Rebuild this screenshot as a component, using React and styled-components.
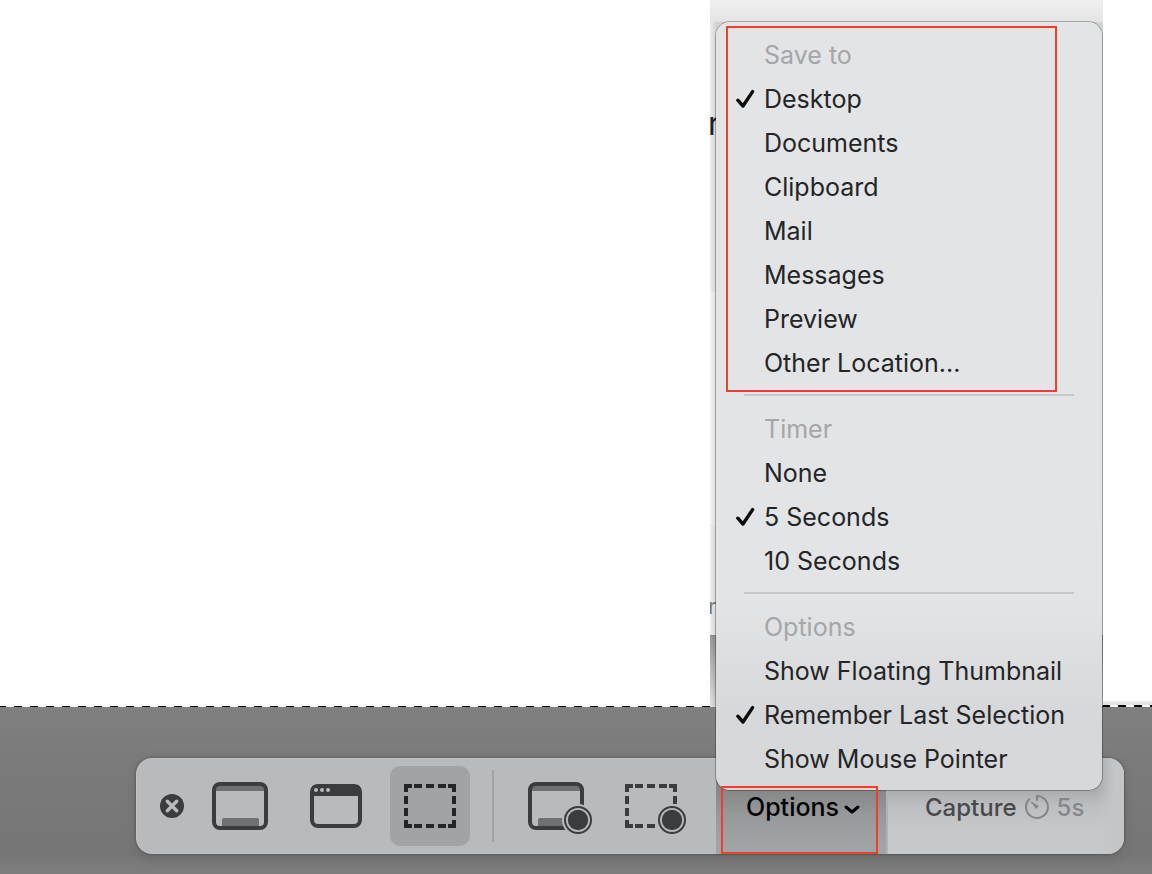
import React from "react";
import styled, { createGlobalStyle, css } from "styled-components";

const Global = createGlobalStyle`
  * { box-sizing: border-box; }
  body { margin: 0; font-family: Inter, "Liberation Sans", sans-serif; background: #fff; }
  button { font: inherit; border: 0; padding: 0; background: none; color: inherit; }
`;

const Screen = styled.main`
  min-height: 100vh;
  display: flex;
  flex-direction: column;
  overflow: hidden;
`;

const Selection = styled.section`
  flex: 1;
  display: flex;
  justify-content: flex-end;
  background: #fff;
  position: relative;
`;

const DashLine = styled.div`
  position: absolute;
  left: -2px;
  right: 0;
  bottom: 0;
  height: 1px;
  background: repeating-linear-gradient(90deg, #000 0 8px, transparent 8px 16px);
`;

const Edge = styled.div`
  width: 49px;
  align-self: flex-end;
  background: linear-gradient(#ececec, #dcdcdc);
  padding-top: 4px;
  &::after {
    content: "";
    display: block;
    height: 2px;
    background: repeating-linear-gradient(90deg, #000 0 7px, #fff 7px 15px, #000 15px 16px);
  }
`;

const Backdrop = styled.div`
  width: 393px;
  display: flex;
  flex-direction: column;
  overflow: hidden;
`;

const TopBand = styled.div`
  height: 22px;
  background: linear-gradient(#f0f0f0, #e4e4e4);
`;

const Band = styled.div`
  flex: ${(p) => p.$size} 0 0;
  overflow: hidden;
  border-top: 1px solid ${(p) => p.$edge || "transparent"};
  background: linear-gradient(90deg, transparent, rgba(0, 0, 0, 0.12) 6px), ${(p) => p.$tone};
`;

const Line = styled.div`
  margin-left: -2px;
  padding-top: ${(p) => p.$space}px;
  font-size: ${(p) => (p.$small ? 22 : 32)}px;
  line-height: 32px;
  color: ${(p) => (p.$small ? "#777" : "#222")};
`;

const Dimmed = styled.section`
  background: linear-gradient(#808080, #7b7b7b 48px, #767676 148px, #7e7e7e);
  padding: 51px 28px 20px 136px;
`;

const Toolbar = styled.div`
  height: 96px;
  display: flex;
  align-items: stretch;
  border-radius: 16px;
  background: #b9babc;
  box-shadow: inset 0 0 0 1px rgba(255, 255, 255, 0.12), 0 0 3px rgba(0, 0, 0, 0.4), 0 4px 14px rgba(0, 0, 0, 0.1);
`;

const Tools = styled.div`
  flex: 1;
  display: flex;
  align-items: center;
`;

const CloseButton = styled.button`
  width: 24px;
  height: 24px;
  margin: 0 16px 0 24px;
  svg { display: block; }
`;

const ToolButton = styled.button`
  width: 80px;
  height: 80px;
  margin-right: 15px;
  border-radius: 10px;
  color: #3b3c3e;
  svg { display: block; }
  ${(p) => p.$active && css`
    background: #a2a3a5;
    color: #242526;
  `}
`;

const Divider = styled.div`
  width: 2px;
  height: 72px;
  margin: 0 22px 0 7px;
  background: #a2a3a5;
`;

const OptionsAnchor = styled.div`
  position: relative;
  width: 172px;
  display: flex;
  border-right: 2px solid #b0b1b3;
`;

const OptionsButton = styled.button`
  flex: 1;
  display: flex;
  align-items: center;
  padding: 2px 0 0 30px;
  gap: 4px;
  font-size: 25px;
  font-weight: 500;
  color: #000;
  background: linear-gradient(#858688 32px, #97989a 56px, #a2a3a5 88px);
  svg { margin-top: 4px; }
`;

const CaptureButton = styled.button`
  width: 236px;
  display: flex;
  align-items: center;
  padding: 2px 0 0 37px;
  gap: 7px;
  font-size: 24px;
  font-weight: 500;
  color: #48494b;
  border-radius: 0 16px 16px 0;
  background:
    linear-gradient(90deg, transparent 208px, #c4c5c7 226px),
    linear-gradient(#a8a9ab 30px, #bdbec0 48px, #c7c8ca 72px);
  span { color: #858688; }
  svg { color: #858688; }
`;

const Menu = styled.div`
  position: absolute;
  z-index: 2;
  left: 0;
  bottom: 64px;
  width: 386px;
  padding: 11px 0 9px;
  border-radius: 14px;
  background: linear-gradient(#e3e4e6 580px, #d7d8da 690px);
  box-shadow: 0 0 0 1px rgba(0, 0, 0, 0.28);
`;

const MenuTitle = styled.div`
  height: 44px;
  padding-left: 48px;
  font-size: 25px;
  line-height: 44px;
  color: #a5a6a8;
`;

const MenuItem = styled.button`
  width: 100%;
  height: 44px;
  display: flex;
  align-items: center;
  padding-left: 19px;
  gap: 9px;
  font-size: 25px;
  line-height: 44px;
  color: #242526;
  white-space: nowrap;
`;

const CheckSlot = styled.span`
  width: 20px;
  height: 20px;
  svg { display: block; }
`;

const Separator = styled.hr`
  height: 2px;
  margin: 9px 28px 11px;
  border: 0;
  background: #c7c8ca;
`;

const Highlight = styled.div`
  position: absolute;
  z-index: 3;
  top: ${(p) => p.$top}px;
  left: ${(p) => p.$left}px;
  width: ${(p) => p.$width}px;
  height: ${(p) => p.$height}px;
  border: 2px solid #ee4028;
  pointer-events: none;
`;

const sections = [
  { title: "Save to", items: ["Desktop", "Documents", "Clipboard", "Mail", "Messages", "Preview", "Other Location..."], checked: "Desktop" },
  { title: "Timer", items: ["None", "5 Seconds", "10 Seconds"], checked: "5 Seconds" },
  { title: "Options", items: ["Show Floating Thumbnail", "Remember Last Selection", "Show Mouse Pointer"], checked: "Remember Last Selection" },
];

const Check = () => (
  <svg width="20" height="20" viewBox="0 0 20 20" fill="none" stroke="#0c0c0d" strokeWidth="3.4" strokeLinecap="round" strokeLinejoin="round">
    <path d="M2.8 11.2 L8 17 L17.6 2.6" />
  </svg>
);

const CloseIcon = () => (
  <svg width="24" height="24" viewBox="0 0 24 24">
    <circle cx="12" cy="12" r="12" fill="#3b3c3e" />
    <path d="M7.3 7.3 L16.7 16.7 M16.7 7.3 L7.3 16.7" stroke="#b9babc" strokeWidth="3.4" strokeLinecap="round" />
  </svg>
);

const Record = ({ x, y }) => (
  <g>
    <circle cx={x} cy={y} r="16" fill="#b9babc" />
    <circle cx={x} cy={y} r="13" fill="none" stroke="currentColor" strokeWidth="2" />
    <circle cx={x} cy={y} r="10.2" fill="currentColor" />
  </g>
);

const ScreenIcon = ({ record }) => (
  <svg width="80" height="80" viewBox="0 0 80 80">
    <path d="M14 18 H66 V25 H14 Z" fill="#6f7072" />
    <path d="M22 61 V54 Q22 52 24 52 H57 Q59 52 59 54 V61 Z" fill="#6f7072" />
    <rect x="14" y="18" width="52" height="44" rx="6" fill="none" stroke="currentColor" strokeWidth="4" />
    {record && <Record x={62} y={54} />}
  </svg>
);

const WindowIcon = () => (
  <svg width="80" height="80" viewBox="0 0 80 80">
    <rect x="17" y="20" width="48" height="40" rx="6" fill="none" stroke="currentColor" strokeWidth="4" />
    <path d="M16 30 V24 Q16 19 21 19 H61 Q66 19 66 24 V30 Z" fill="currentColor" />
    <g fill="#b9babc">
      <circle cx="21" cy="24" r="2" />
      <circle cx="27" cy="24" r="2" />
      <circle cx="33" cy="24" r="2" />
    </g>
  </svg>
);

const AreaIcon = ({ record }) => (
  <svg width="80" height="80" viewBox="0 0 80 80">
    <path
      d="M14 26 V18 H22 V22 H18 V26 Z M58 18 H66 V26 H62 V22 H58 Z M14 54 H18 V58 H22 V62 H14 Z M62 54 H66 V62 H58 V58 H62 Z
         M24 18 H32 V22 H24 Z M36 18 H44 V22 H36 Z M48 18 H56 V22 H48 Z M24 58 H32 V62 H24 Z M36 58 H44 V62 H36 Z M48 58 H56 V62 H48 Z
         M14 30 H18 V38 H14 Z M14 42 H18 V50 H14 Z M62 30 H66 V38 H62 Z M62 42 H66 V50 H62 Z"
      fill="currentColor"
    />
    {record && <Record x={61} y={54} />}
  </svg>
);

const Chevron = () => (
  <svg width="18" height="12" viewBox="0 0 18 12" fill="none" stroke="currentColor" strokeWidth="3" strokeLinecap="round" strokeLinejoin="round">
    <path d="M3 4 L9 9 L15 4" />
  </svg>
);

const TimerIcon = () => (
  <svg width="26" height="26" viewBox="0 0 26 26" fill="none" stroke="currentColor" strokeWidth="2" strokeLinecap="round">
    <path d="M13 6 V2 A11 11 0 1 1 5.2 5.2" />
    <path d="M7.5 8.3 L14.2 12 L12.6 14.2 Z" fill="currentColor" strokeWidth="1" strokeLinejoin="round" />
  </svg>
);

export default function App() {
  return (
    <Screen>
      <Global />
      <Selection>
        <Backdrop aria-hidden="true">
          <TopBand />
          <Band $size={271} $tone="#efefef">
            <Line $space={85}>r</Line>
          </Band>
          <Band $size={233} $tone="#f8f8f8" />
          <Band $size={110} $tone="#f0f0f0" $edge="#e0e0e0">
            <Line $small $space={64}>n</Line>
          </Band>
          <Band $size={71} $tone="linear-gradient(#9c9c9c, #e4e4e4)" $edge="#8a8a8a" />
        </Backdrop>
        <Edge />
        <DashLine />
      </Selection>
      <Dimmed>
        <Toolbar role="toolbar" aria-label="Screenshot">
          <Tools>
            <CloseButton aria-label="Close"><CloseIcon /></CloseButton>
            <ToolButton aria-label="Capture entire screen"><ScreenIcon /></ToolButton>
            <ToolButton aria-label="Capture window"><WindowIcon /></ToolButton>
            <ToolButton aria-label="Capture selection" $active><AreaIcon /></ToolButton>
            <Divider />
            <ToolButton aria-label="Record entire screen"><ScreenIcon record /></ToolButton>
            <ToolButton aria-label="Record selection"><AreaIcon record /></ToolButton>
          </Tools>
          <OptionsAnchor>
            <OptionsButton aria-expanded="true">Options<Chevron /></OptionsButton>
            <Menu>
              {sections.map((s, i) => (
                <React.Fragment key={s.title}>
                  {i > 0 && <Separator />}
                  <MenuTitle>{s.title}</MenuTitle>
                  {s.items.map((item) => (
                    <MenuItem key={item}>
                      <CheckSlot>{s.checked === item && <Check />}</CheckSlot>
                      {item}
                    </MenuItem>
                  ))}
                </React.Fragment>
              ))}
              <Highlight $top={4} $left={10} $width={331} $height={366} />
            </Menu>
            <Highlight $top={28} $left={5} $width={157} $height={68} />
          </OptionsAnchor>
          <CaptureButton>Capture<TimerIcon /><span>5s</span></CaptureButton>
        </Toolbar>
      </Dimmed>
    </Screen>
  );
}
